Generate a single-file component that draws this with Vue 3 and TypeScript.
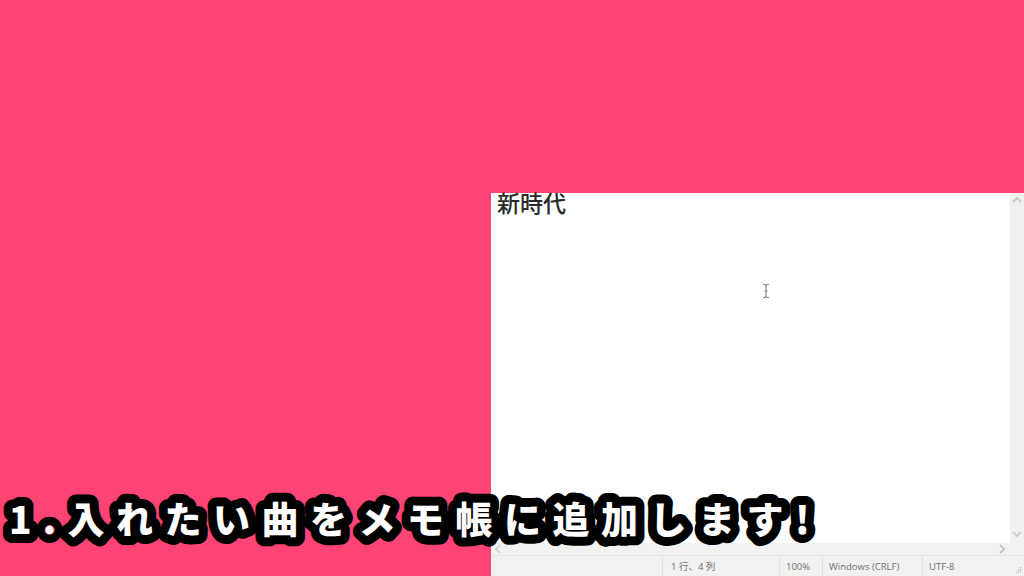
<script setup lang="ts">
const statusCells = [
  { text: '1 行、4 列', cls: 'pos' },
  { text: '100%', cls: 'zoom' },
  { text: 'Windows (CRLF)', cls: 'eol' },
  { text: 'UTF-8', cls: 'enc' },
]
</script>

<template>
  <div class="page">
    <div class="notepad">
      <div class="main">
        <div class="editor">
          <div class="doc">新時代</div>
          <svg class="ibeam" width="8" height="16" viewBox="0 0 8 16">
            <path d="M1 1.5h2l1 1 1-1h2M4 2.5v11M1 14.5h2l1-1 1 1h2M2.5 8h3" fill="none" stroke="#888" stroke-width="1.2" />
          </svg>
        </div>
        <div class="vscroll">
          <svg width="10" height="6" viewBox="0 0 10 6"><path d="M1 5l4-4 4 4" fill="none" stroke="#c4c4c2" stroke-width="1.7" /></svg>
          <svg width="10" height="6" viewBox="0 0 10 6"><path d="M1 1l4 4 4-4" fill="none" stroke="#c4c4c2" stroke-width="1.7" /></svg>
        </div>
      </div>
      <div class="hscroll">
        <svg width="6" height="10" viewBox="0 0 6 10"><path d="M5 1L1 5l4 4" fill="none" stroke="#c8c8c6" stroke-width="1.3" /></svg>
        <svg width="6" height="10" viewBox="0 0 6 10"><path d="M1 1l4 4-4 4" fill="none" stroke="#bbb" stroke-width="1.7" /></svg>
      </div>
      <div class="status">
        <div v-for="c in statusCells" :key="c.cls" class="cell" :class="c.cls">{{ c.text }}</div>
        <div class="grip">
          <svg width="6" height="6" viewBox="0 0 6 6"><path d="M4.5 0v1.2M2.5 2.2v1.2M4.5 2.2v1.2M.5 4.4v1.2M2.5 4.4v1.2M4.5 4.4v1.2" stroke="#b0b0b0" stroke-width="1.2" /></svg>
        </div>
      </div>
    </div>
    <svg class="caption" width="1024" height="80" viewBox="0 0 1024 80">
      <text class="cap-text" x="9" y="50">1.入れたい曲をメモ帳に追加します!</text>
    </svg>
  </div>
</template>

<style scoped>
.page {
  position: relative;
  width: 1024px;
  height: 576px;
  overflow: hidden;
  background: #fe4475;
  box-sizing: border-box;
  padding: 193px 0 0 491px;
  font-family: "Noto Sans CJK JP", "Noto Sans", sans-serif;
}
.notepad {
  height: 383px;
  display: flex;
  flex-direction: column;
  background: #fff;
}
.main {
  flex: 1;
  display: flex;
  min-height: 0;
}
.editor {
  flex: 1;
  position: relative;
}
.doc {
  padding-left: 6px;
  font-size: 23px;
  line-height: 23px;
  margin-top: -2px;
  font-weight: 500;
  color: #2a2a2a;
}
.ibeam {
  position: absolute;
  left: 271px;
  top: 90px;
}
.vscroll {
  width: 14px;
  background: #f0f0ee;
  display: flex;
  flex-direction: column;
  justify-content: space-between;
  align-items: center;
  padding: 4px 0 6px;
  box-sizing: border-box;
}
.hscroll {
  height: 12px;
  background: #f1f1ef;
  display: flex;
  justify-content: space-between;
  align-items: center;
  padding: 0 19px 0 4px;
}
.status {
  height: 21px;
  box-sizing: border-box;
  background: #f1f1ef;
  border-top: 1px solid #e4e4e2;
  display: flex;
  font-family: "Open Sans", "Noto Sans CJK JP", sans-serif;
  font-size: 9.5px;
  line-height: 21px;
  color: #707070;
}
.cell {
  box-sizing: border-box;
  padding-left: 8px;
  border-left: 1px solid #e0e0de;
  white-space: nowrap;
}
.pos { margin-left: 171px; width: 117px; }
.zoom { width: 43px; padding-left: 6px; }
.eol { width: 100px; padding-left: 6px; }
.enc { width: 60px; padding-left: 6px; }
.grip {
  flex: 1;
  display: flex;
  justify-content: flex-end;
  align-items: flex-end;
  padding: 0 2px 3px 0;
}
.caption {
  position: absolute;
  left: 0;
  top: 484px;
}
.cap-text {
  font-family: "Noto Sans CJK JP", sans-serif;
  font-weight: 900;
  font-size: 37px;
  letter-spacing: 11.5px;
  fill: #fff;
  stroke: #000;
  stroke-width: 18px;
  stroke-linejoin: round;
  paint-order: stroke fill;
}
</style>
